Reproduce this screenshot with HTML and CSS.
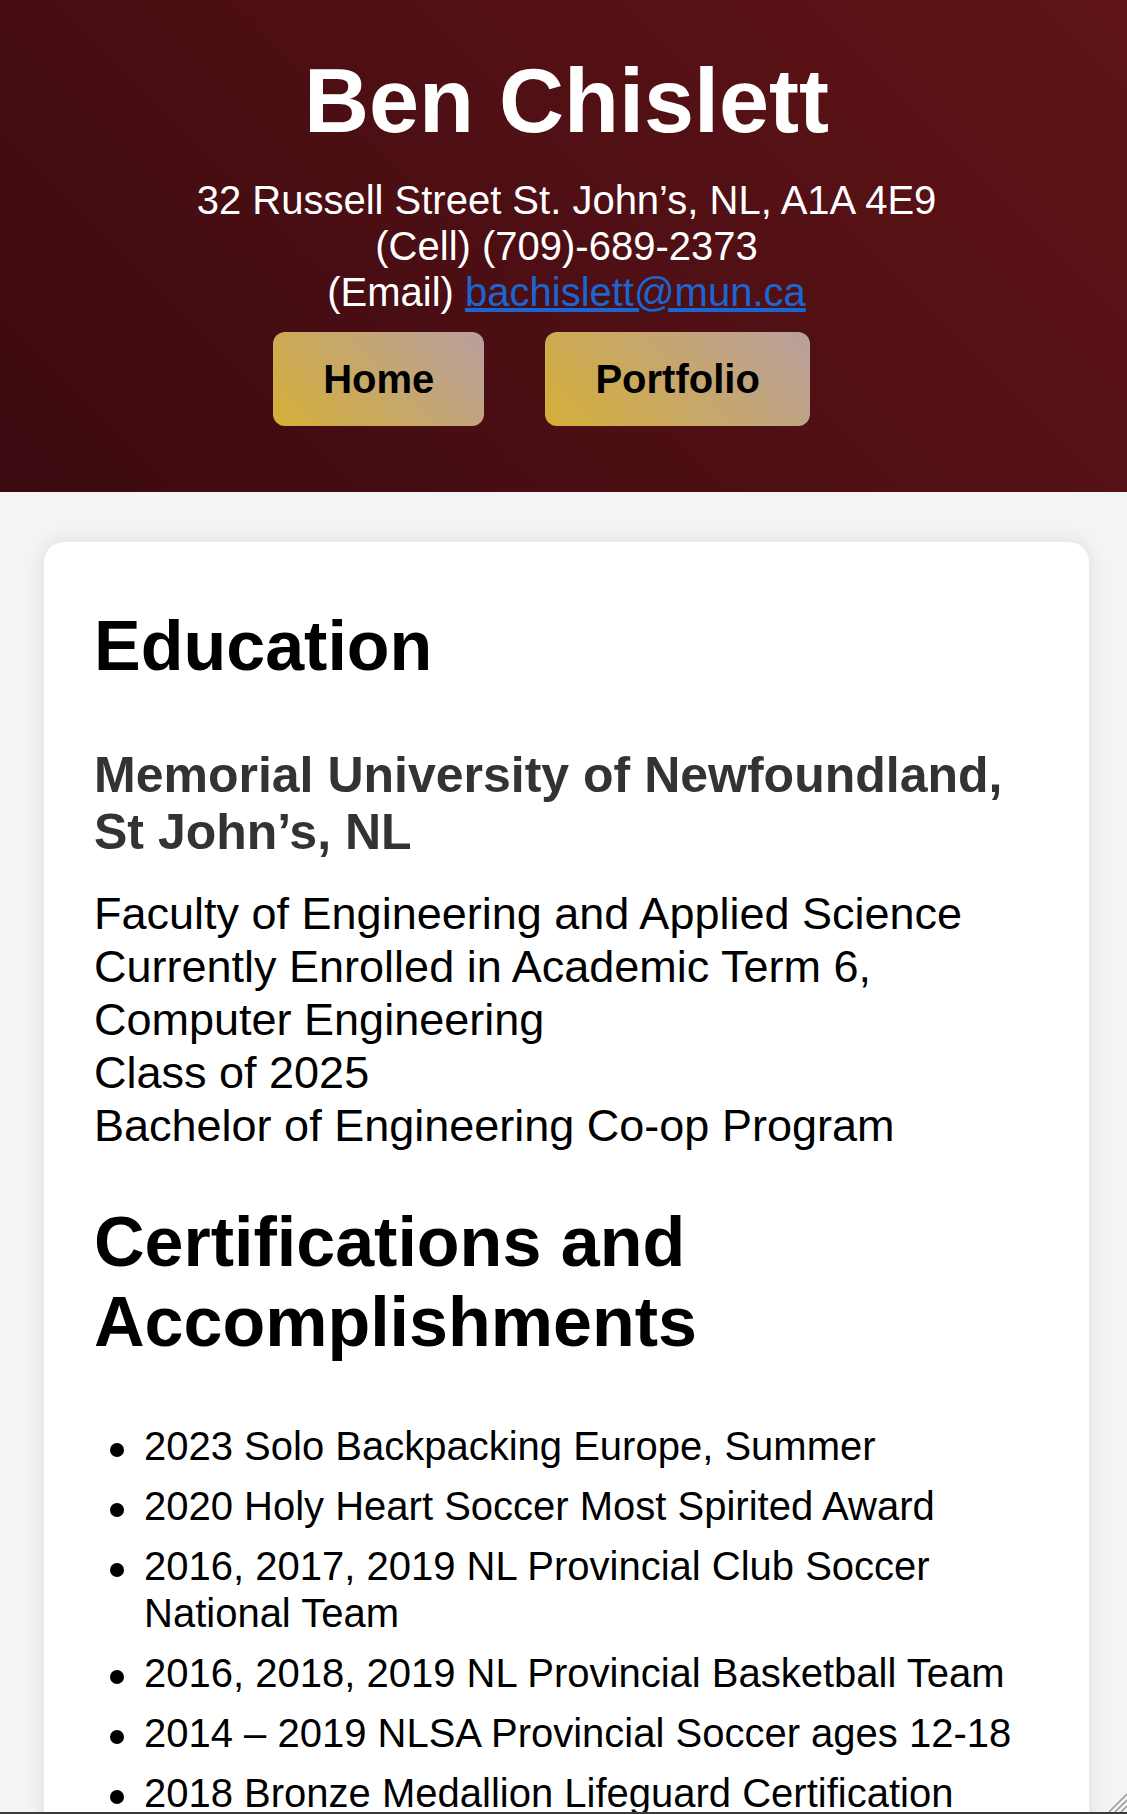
FILE: index.html
```html
<!DOCTYPE html>
<html lang="en">
<head>
<meta charset="utf-8">
<title>Ben Chislett</title>
<link rel="stylesheet" href="styles.css">
</head>
<body>
<header class="site-header">
  <h1 class="name">Ben Chislett</h1>
  <p class="contact">32 Russell Street St. John’s, NL, A1A 4E9<br>(Cell) (709)-689-2373<br>(Email) <a href="mailto:bachislett@mun.ca">bachislett@mun.ca</a></p>
  <nav class="nav"><a class="btn" href="#">Home</a> <a class="btn" href="#">Portfolio</a></nav>
</header>
<main class="main">
  <section class="card">
    <h2 class="section-title">Education</h2>
    <h3 class="school">Memorial University of Newfoundland, St John’s, NL</h3>
    <p class="details">Faculty of Engineering and Applied Science<br>Currently Enrolled in Academic Term 6, Computer Engineering<br>Class of 2025<br>Bachelor of Engineering Co-op Program</p>
    <h2 class="section-title">Certifications and Accomplishments</h2>
    <ul class="list">
      <li>2023 Solo Backpacking Europe, Summer</li>
      <li>2020 Holy Heart Soccer Most Spirited Award</li>
      <li>2016, 2017, 2019 NL Provincial Club Soccer National Team</li>
      <li>2016, 2018, 2019 NL Provincial Basketball Team</li>
      <li>2014 – 2019 NLSA Provincial Soccer ages 12-18</li>
      <li>2018 Bronze Medallion Lifeguard Certification</li>
    </ul>
  </section>
</main>
<div class="frame-edge"></div>
<svg class="grip" width="22" height="22" viewBox="0 0 22 22" aria-hidden="true">
  <line x1="4" y1="22" x2="22" y2="4" stroke="#9a9a9a" stroke-width="1.6"/>
  <line x1="10" y1="22" x2="22" y2="10" stroke="#9a9a9a" stroke-width="1.6"/>
  <line x1="16" y1="22" x2="22" y2="16" stroke="#9a9a9a" stroke-width="1.6"/>
</svg>
</body>
</html>
```

FILE: styles.css
```css
html, body {
  margin: 0;
  padding: 0;
}

body {
  background: #f4f4f4;
  font-family: "Liberation Sans", Arial, sans-serif;
  color: #000;
  line-height: 1.149;
}

.site-header {
  background: linear-gradient(45deg, #3b0a10 0%, #4e0f14 50%, #601416 100%);
  color: #fff;
  text-align: center;
  padding: 50px 0 66px 6px;
}

.name {
  margin: 0;
  font-size: 90px;
  font-weight: 700;
  line-height: 103.4px;
}

.contact {
  margin: 24px 0 0;
  font-size: 40px;
  line-height: 46px;
}

.contact a {
  color: #1a66d2;
}

.nav {
  margin-top: 17px;
  font-size: 40px;
  line-height: 46px;
}

.btn {
  display: inline-block;
  padding: 24px 50px;
  margin-right: 50px;
  background: linear-gradient(45deg, #d4af37 0%, #b99f9f 100%);
  color: #000;
  font-weight: 700;
  text-decoration: none;
  border-radius: 12px;
}

.main {
  padding: 50px 38px 0 44px;
}

.card {
  background: #fff;
  border-radius: 20px;
  box-shadow: 0 0 20px rgba(0, 0, 0, 0.1);
  padding: 64px 50px 50px;
}

.section-title {
  font-size: 70px;
  font-weight: 700;
  line-height: 80.4px;
  margin: 50px 0 60px;
}

.section-title:first-child {
  margin-top: 0;
}

.school {
  font-size: 50px;
  font-weight: 700;
  line-height: 57.5px;
  color: #333;
  margin: 0 0 25px;
}

.details {
  font-size: 45px;
  line-height: 53px;
  margin: 0;
}

.list {
  margin: 0;
  padding-left: 50px;
  font-size: 40px;
  line-height: 47px;
  list-style: none;
}

.list li {
  position: relative;
  margin-bottom: 13px;
}

.list li::before {
  content: "";
  position: absolute;
  left: -34px;
  top: 20px;
  width: 14px;
  height: 14px;
  border-radius: 50%;
  background: #000;
}

.frame-edge {
  position: fixed;
  left: 0;
  right: 0;
  bottom: 0;
  height: 2px;
  background: #3a3a3a;
}

.grip {
  position: fixed;
  right: 0;
  bottom: 2px;
}
```
